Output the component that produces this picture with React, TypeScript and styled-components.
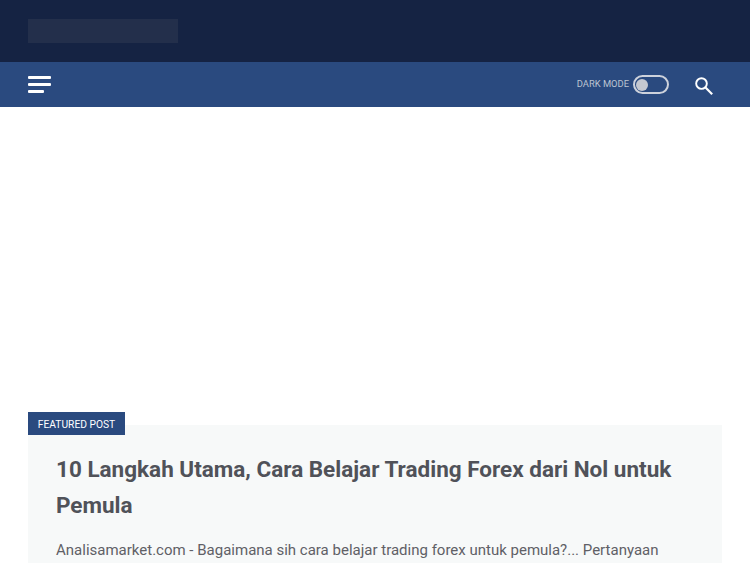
import React from 'react';
import styled, {createGlobalStyle} from 'styled-components';

const GlobalStyle = createGlobalStyle`
  html, body {
    margin: 0;
    height: 563px;
    overflow: hidden;
    background: #fff;
    font-family: Roboto, "Liberation Sans", sans-serif;
  }
`;

export default function App() {
  return (
    <Root>
      <GlobalStyle />
      <TopHeader>
        <LogoPlaceholder />
      </TopHeader>
      <NavBar>
        <Burger aria-label="menu">
          <BurgerLine />
          <BurgerLine />
          <BurgerLine $short />
        </Burger>
        <NavRight>
          <DarkLabel>DARK MODE</DarkLabel>
          <Toggle>
            <ToggleKnob />
          </Toggle>
          <SearchIcon viewBox="0 0 24 24" aria-hidden="true">
            <circle cx="9" cy="9" r="6.4" fill="none" stroke="#fff" strokeWidth="2.3" />
            <path d="M13.8 13.8l8 8" stroke="#fff" strokeWidth="2.6" fill="none" />
          </SearchIcon>
        </NavRight>
      </NavBar>
      <AdSpace />
      <Main>
        <FeaturedCard>
          <FeaturedBadge>FEATURED POST</FeaturedBadge>
          <PostTitle>10 Langkah Utama, Cara Belajar Trading Forex dari Nol untuk Pemula</PostTitle>
          <PostExcerpt>
            Analisamarket.com - Bagaimana sih cara belajar trading forex untuk pemula?... Pertanyaan
          </PostExcerpt>
        </FeaturedCard>
      </Main>
    </Root>
  );
}

const Root = styled.div`
  height: 563px;
  overflow: hidden;
`;

const TopHeader = styled.header`
  height: 62px;
  box-sizing: border-box;
  padding: 19px 28px 0;
  background: #152343;
`;

const LogoPlaceholder = styled.div`
  width: 150px;
  height: 24px;
  background: #232f4b;
`;

const NavBar = styled.nav`
  height: 45px;
  box-sizing: border-box;
  padding: 0 36px 0 28px;
  display: flex;
  align-items: center;
  justify-content: space-between;
  background: #2a4a7f;
`;

const Burger = styled.div`
  width: 23px;
  display: flex;
  flex-direction: column;
  gap: 4px;
`;

const BurgerLine = styled.span<{$short?: boolean}>`
  display: block;
  height: 3px;
  width: ${p => (p.$short ? '16px' : '23px')};
  border-radius: 1px;
  background: #fff;
`;

const NavRight = styled.div`
  display: flex;
  align-items: center;
`;

const DarkLabel = styled.span`
  font-size: 9.4px;
  color: #bcc4d2;
  margin: 0 4px 2px 0;
`;

const Toggle = styled.div`
  width: 36px;
  height: 19px;
  box-sizing: border-box;
  border: 2px solid #cdd2dc;
  border-radius: 10px;
  display: flex;
  align-items: center;
  padding-left: 1px;
  margin-right: 25px;
`;

const ToggleKnob = styled.span`
  width: 12px;
  height: 12px;
  border-radius: 50%;
  background: #c4c8d0;
`;

const SearchIcon = styled.svg`
  width: 20px;
  height: 20px;
  display: block;
  margin-top: 3px;
`;

const AdSpace = styled.div`
  height: 318px;
`;

const Main = styled.main`
  padding: 0 28px;
`;

const FeaturedCard = styled.article`
  position: relative;
  height: 200px;
  box-sizing: border-box;
  padding: 26px 28px 0;
  background: #f7f9f9;
`;

const FeaturedBadge = styled.div`
  position: absolute;
  left: 0;
  top: -13px;
  width: 97px;
  height: 23px;
  line-height: 25px;
  text-align: center;
  font-size: 10.25px;
  color: #fff;
  background: #2a4a7f;
`;

const PostTitle = styled.h2`
  margin: 0;
  font-size: 22.5px;
  line-height: 36px;
  font-weight: 700;
  color: #505259;
`;

const PostExcerpt = styled.p`
  margin: 15px 0 0;
  font-size: 15px;
  line-height: 24px;
  color: #5f6066;
  white-space: nowrap;
`;
